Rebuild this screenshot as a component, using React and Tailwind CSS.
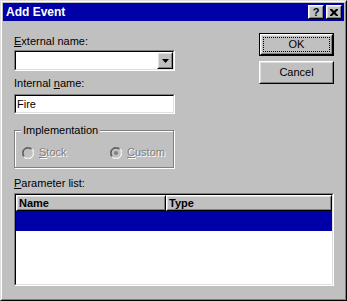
function Raised({ className = "", innerClass = "", children }) {
  return (
    <div className={`bg-[#c0c0c0] border border-t-white border-l-white border-r-black border-b-black ${className}`}>
      <div className={`h-full w-full border border-t-[#dfdfdf] border-l-[#dfdfdf] border-r-[#808080] border-b-[#808080] ${innerClass}`}>
        {children}
      </div>
    </div>
  );
}

function Sunken({ className = "", innerClass = "", children }) {
  return (
    <div className={`border border-t-[#808080] border-l-[#808080] border-r-white border-b-white ${className}`}>
      <div className={`h-full w-full border border-t-black border-l-black border-r-[#dfdfdf] border-b-[#dfdfdf] ${innerClass}`}>
        {children}
      </div>
    </div>
  );
}

function Radio({ checked }) {
  return (
    <svg width="12" height="12" viewBox="0 0 12 12" className="shrink-0">
      <circle cx="6" cy="6" r="4.5" fill="#c0c0c0" />
      <path d="M1.76 10.24 A6 6 0 0 1 10.24 1.76" stroke="#808080" strokeWidth="1" fill="none" />
      <path d="M2.46 9.54 A5 5 0 0 1 9.54 2.46" stroke="#404040" strokeWidth="1" fill="none" />
      <path d="M10.24 1.76 A6 6 0 0 1 1.76 10.24" stroke="#ffffff" strokeWidth="1" fill="none" />
      <path d="M9.54 2.46 A5 5 0 0 1 2.46 9.54" stroke="#dfdfdf" strokeWidth="1" fill="none" />
      {checked && <circle cx="6" cy="6" r="2" fill="#808080" />}
    </svg>
  );
}

export default function App() {
  return (
    <div className="w-[347px] h-[301px] bg-[#c0c0c0] border border-t-[#dfdfdf] border-l-[#dfdfdf] border-r-black border-b-black font-['Liberation_Sans',Arial,sans-serif] text-[11px] leading-[13px] text-black">
      <div className="h-full border border-t-white border-l-white border-r-[#808080] border-b-[#808080] p-px flex flex-col">
        {/* title bar */}
        <div className="h-[18px] shrink-0 bg-[#0000a8] flex items-center pl-[3px] pr-[2px]">
          <span className="font-bold text-white text-[12px]">Add Event</span>
          <div className="ml-auto flex gap-[2px]">
            <Raised className="w-[16px] h-[14px]" innerClass="flex items-center justify-center">
              <span className="font-bold text-[11px] leading-[11px]">?</span>
            </Raised>
            <Raised className="w-[16px] h-[14px]" innerClass="flex items-center justify-center">
              <svg width="8" height="7" viewBox="0 0 8 7">
                <path d="M0 0h2l2 2 2-2h2v1l-2.5 2.5L8 6v1H6L4 5 2 7H0V6l2.5-2.5L0 1z" fill="black" />
              </svg>
            </Raised>
          </div>
        </div>

        {/* client */}
        <div className="flex-1 pl-[11px] pr-[10px] flex flex-col">
          <div className="flex">
            <div className="w-[161px] pt-[14px] flex flex-col">
              <div>
                <u>E</u>xternal name:
              </div>
              <Sunken className="mt-[2px] w-[161px] h-[21px]" innerClass="bg-white flex justify-end">
                <Raised className="w-[16px] h-full" innerClass="flex items-center justify-center">
                  <svg width="7" height="4" viewBox="0 0 7 4">
                    <path d="M0 0h7L3.5 4z" fill="black" />
                  </svg>
                </Raised>
              </Sunken>

              <div className="mt-[6px]">
                Internal <u>n</u>ame:
              </div>
              <Sunken className="mt-[4px] w-[161px] h-[20px]" innerClass="bg-white flex items-center pl-px">
                Fire
              </Sunken>

              <div className="relative mt-[10px] pt-[6px]">
                <div className="w-[160px] h-[38px] border border-[#808080] shadow-[inset_1px_1px_0_white,1px_1px_0_white] flex items-start pl-[7px] pt-[15px] text-[#808080] [text-shadow:1px_1px_0_white]">
                  <div className="w-[88px] flex items-center gap-[5px]">
                    <Radio />
                    <span>
                      <u>S</u>tock
                    </span>
                  </div>
                  <div className="flex items-center gap-[5px]">
                    <Radio checked />
                    <span>
                      <u>C</u>ustom
                    </span>
                  </div>
                </div>
                <span className="absolute left-[7px] top-0 px-[2px] bg-[#c0c0c0]">Implementation</span>
              </div>
            </div>

            <div className="ml-auto pt-[12px] flex flex-col gap-[5px]">
              <div className="w-[75px] h-[23px] border border-black">
                <Raised className="w-full h-full" innerClass="p-px">
                  <div className="w-full h-full border border-dotted border-black flex items-center justify-center">
                    OK
                  </div>
                </Raised>
              </div>
              <Raised className="w-[75px] h-[23px]" innerClass="flex items-center justify-center">
                Cancel
              </Raised>
            </div>
          </div>

          <div className="mt-[9px]">
            <u>P</u>arameter list:
          </div>
          <Sunken className="mt-[3px] h-[93px]" innerClass="bg-white flex flex-col">
            <div className="h-[16px] flex shrink-0">
              <Raised className="w-[150px] h-full" innerClass="pl-px flex items-center font-bold">
                Name
              </Raised>
              <Raised className="flex-1 h-full" innerClass="pl-px flex items-center font-bold">
                Type
              </Raised>
            </div>
            <div className="h-[20px] bg-[#0000a8]" />
          </Sunken>
        </div>
      </div>
    </div>
  );
}
